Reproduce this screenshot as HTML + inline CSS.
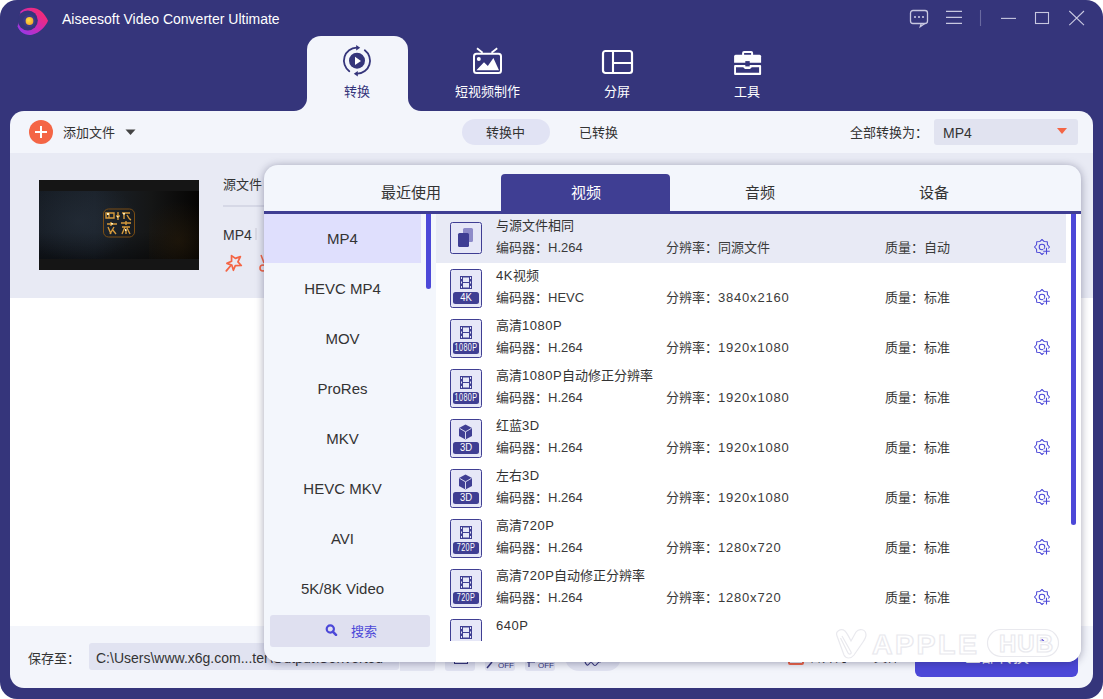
<!DOCTYPE html>
<html lang="zh-CN"><head><meta charset="utf-8">
<style>
*{box-sizing:border-box;margin:0;padding:0}
html,body{width:1103px;height:699px;overflow:hidden;background:#fff}
body{font-family:"Liberation Sans",sans-serif;color:#333;position:relative}
.a{position:absolute}
.win{left:0;top:0;width:1103px;height:699px;background:#35357b;border-radius:17px;overflow:hidden}
.title{left:62px;top:10px;color:#fff;font-size:14px;line-height:18px}
.panel{left:10px;top:111px;width:1083px;height:577px;background:#f3f5fb;border-radius:14px;overflow:hidden}
.navtab{left:307px;top:36px;width:101px;height:80px;background:#f3f5fb;border-radius:14px 14px 0 0}
.navlbl{font-size:13px;line-height:16px;text-align:center;width:120px}
.t13{font-size:13px;line-height:16px;white-space:nowrap}
.dd{left:264px;top:165px;width:817px;height:497px;background:#f3f6fc;border-radius:14px;overflow:hidden;box-shadow:0 1px 9px rgba(30,30,70,.4)}
.fmt{left:0;width:157px;height:50px;text-align:center;font-size:15px;line-height:50px;color:#333}
.row{left:0;width:630px;height:50px}
.ib{left:14px;top:8px;width:32px;height:32px;border:1.5px solid #3f3e93;border-radius:2.5px;background:#e6e7f7}
.gear{left:598px;top:25px}
.tb{top:9px;width:174px;height:38px;line-height:38px;text-align:center;font-size:15px;color:#333}
.badge{left:17px;top:28px;width:26px;height:12px;background:#3f3e93;border-radius:2.5px;color:#fff;font-size:10px;line-height:12px;overflow:hidden;white-space:nowrap}
.badge span{position:absolute;left:50%;top:0;transform:translateX(-50%) scaleX(.95)}
.badge.n span{transform:translateX(-50%) scaleX(.72);letter-spacing:.6px}
.tt{color:#333}
.d{letter-spacing:.8px}
.l{letter-spacing:.5px}
.dt{color:#3a3a3a}
</style></head><body>
<svg width="0" height="0" style="position:absolute">
<defs>
<symbol id="film" viewBox="0 0 13 13"><rect x="0" y="0" width="12" height="13" fill="#3f3e93"/><rect x="3" y="1.5" width="6" height="4.5" fill="#e6e7f7"/><rect x="3" y="7" width="6" height="4.5" fill="#e6e7f7"/><path d="M1.5 1 V3 M1.5 5.5 V7.5 M1.5 10 V12 M10.5 1 V3 M10.5 5.5 V7.5 M10.5 10 V12" stroke="#e6e7f7" stroke-width="1"/></symbol>
<symbol id="cube" viewBox="0 0 15 16"><path d="M7.5 0.5 L14 4 V12 L7.5 15.5 L1 12 V4 Z" fill="#3f3e93"/><path d="M1.5 4.3 L7.5 7.8 L13.5 4.3 M7.5 7.8 V15" stroke="#e6e7f7" stroke-width="0.9" fill="none"/></symbol>
<mask id="gm"><rect width="17" height="17" fill="#fff"/><path d="M12.5 8.5 V15.5 M9 12 H16" stroke="#000" stroke-width="3.5"/></mask>
<symbol id="gear" viewBox="0 0 17 17"><g mask="url(#gm)"><path id="gp" fill="none" stroke="#4c48d8" stroke-width="1.05" stroke-linejoin="round" d="M8.00 0.50 L10.26 2.55 L13.30 2.70 L13.45 5.74 L15.50 8.00 L13.45 10.26 L13.30 13.30 L10.26 13.45 L8.00 15.50 L5.74 13.45 L2.70 13.30 L2.55 10.26 L0.50 8.00 L2.55 5.74 L2.70 2.70 L5.74 2.55 Z"/><circle cx="8" cy="8" r="2.8" fill="none" stroke="#4c48d8" stroke-width="1.05"/></g><path d="M12.5 8.8 V15.5 M9.2 12.3 H15.8" stroke="#4c48d8" stroke-width="1.1"/></symbol>
</defs></svg>
<div class="a win">
  <!-- logo -->
  <svg class="a" style="left:0;top:0" width="60" height="45" viewBox="0 0 60 45">
    <defs><linearGradient id="lg" x1="0" y1="1" x2="1" y2="0"><stop offset="0" stop-color="#8a3cf2"/><stop offset=".45" stop-color="#c92bb8"/><stop offset=".75" stop-color="#ee2a80"/><stop offset="1" stop-color="#f5386a"/></linearGradient>
    <radialGradient id="yg" cx=".4" cy=".4" r=".7"><stop offset="0" stop-color="#ffe040"/><stop offset="1" stop-color="#f0a030"/></radialGradient></defs>
    <path d="M20.5 11.5 C24 8 31 6.5 37 8.8 C42 11 45.5 15.5 48 20.8 C45.5 26.5 40.5 32.5 32 34.8 C25 36 19.5 32 17.6 26.5 Z" fill="url(#lg)"/>
    <circle cx="27.8" cy="20.4" r="10" fill="#35357b"/>
    <circle cx="29.3" cy="21" r="6.2" fill="#3c3a88"/>
    <circle cx="29.5" cy="21" r="3.9" fill="url(#yg)"/>
  </svg>
  <div class="a title">Aiseesoft Video Converter Ultimate</div>
  <!-- window controls -->
  <svg class="a" style="left:905px;top:8px" width="185" height="22" viewBox="0 0 185 22">
    <g fill="none" stroke="#c8c8e0" stroke-width="1.3">
      <rect x="5.5" y="2.5" width="17" height="13" rx="2.5"/>
      <path d="M16.2 15.5 L15.3 18.6 L19.8 15.5"/>
      <path d="M41 3.4 H57 M41 9.4 H57 M41 15.4 H57" stroke-width="1.1"/>
      <path d="M75.5 2 V18" stroke="#6a6aa0" stroke-width="1.1"/>
      <path d="M96 10.4 H111" stroke-width="1.1"/>
      <rect x="130.5" y="4.5" width="13" height="11" stroke-width="1.1"/>
      <path d="M164.3 3 L179 17.2 M179 3 L164.3 17.2" stroke-width="1.1"/>
    </g>
    <g fill="#c8c8e0"><circle cx="10" cy="9" r="1.1"/><circle cx="14" cy="9" r="1.1"/><circle cx="18" cy="9" r="1.1"/></g>
  </svg>
  <!-- nav tab active -->
  <div class="a navtab"></div>
  <svg class="a" style="left:294px;top:98px" width="13" height="13"><path d="M0 13 H13 V0 A13 13 0 0 1 0 13 Z" fill="#f3f5fb"/></svg>
  <svg class="a" style="left:408px;top:98px" width="13" height="13"><path d="M13 13 H0 V0 A13 13 0 0 0 13 13 Z" fill="#f3f5fb"/></svg>
  <!-- nav icons -->
  <svg class="a" style="left:341px;top:45px" width="32" height="32" viewBox="0 0 32 32">
    <g fill="none" stroke="#35357b" stroke-width="1.8" stroke-linecap="round">
      <path d="M8.3 26.2 A13 13 0 0 1 15.6 2.7"/>
      <path d="M23.8 5.3 A13 13 0 0 1 16.4 28.7"/>
    </g>
    <path d="M15.2 0 L19.2 2.8 L15.2 5.6 Z" fill="#35357b"/>
    <path d="M16.8 25.9 L12.8 28.7 L16.8 31.5 Z" fill="#35357b"/>
    <circle cx="16" cy="15.7" r="8" fill="#35357b"/>
    <path d="M14 11.8 L20 15.9 L14 20 Z" fill="#fff"/>
  </svg>
  <div class="a navlbl" style="left:297px;top:84px;color:#35357b">转换</div>

  <svg class="a" style="left:470px;top:46px" width="34" height="30" viewBox="0 0 34 30">
    <path d="M7 2.3 L12.6 6.8 M27.2 2.3 L21.5 6.8" stroke="#fff" stroke-width="1.8" fill="none"/>
    <rect x="4" y="7.7" width="27" height="19.3" rx="2.5" fill="none" stroke="#fff" stroke-width="2"/>
    <circle cx="8.8" cy="12.9" r="2" fill="#fff"/>
    <path d="M6.4 24.2 L14 16.2 L17.8 20 L23.4 12 L29 24.2 Z" fill="#fff"/>
  </svg>
  <div class="a navlbl" style="left:427px;top:84px;color:#fff">短视频制作</div>

  <svg class="a" style="left:600px;top:48px" width="34" height="28" viewBox="0 0 34 28">
    <rect x="3" y="3" width="29" height="22" rx="2.5" fill="none" stroke="#fff" stroke-width="2.2"/>
    <path d="M13 3 V25 M13 15 H32" stroke="#fff" stroke-width="2.1" fill="none"/>
  </svg>
  <div class="a navlbl" style="left:557px;top:84px;color:#fff">分屏</div>

  <svg class="a" style="left:731px;top:49px" width="32" height="28" viewBox="0 0 32 28">
    <rect x="12.1" y="2.9" width="9" height="4.5" rx="1" fill="none" stroke="#fff" stroke-width="2"/>
    <path d="M3.1 13.8 V7.3 Q3.1 5.8 4.6 5.8 H28.6 Q30.1 5.8 30.1 7.3 V13.8 Z" fill="#fff"/>
    <path fill="#fff" fill-rule="evenodd" d="M4.1 16 H29.1 Q30.1 16 30.1 17 V25 Q30.1 26 29.1 26 H4.1 Q3.1 26 3.1 25 V17 Q3.1 16 4.1 16 Z M5 18.2 V23.8 H28.1 V18.2 H20.8 L19 19.9 H14 L12.2 18.2 Z"/>
    <rect x="14.3" y="12.1" width="4.4" height="5.3" fill="#35357b"/>
  </svg>
  <div class="a navlbl" style="left:687px;top:84px;color:#fff">工具</div>

  <!-- main light panel -->
  <div class="a panel">
    <!-- toolbar -->
    <div class="a" style="left:19px;top:9px;width:24px;height:24px;border-radius:50%;background:#f46545"></div>
    <div class="a" style="left:25px;top:20px;width:12px;height:2px;background:#fff"></div>
    <div class="a" style="left:30px;top:15px;width:2px;height:12px;background:#fff"></div>
    <div class="a t13" style="left:53px;top:14px">添加文件</div>
    <svg class="a" style="left:115px;top:18px" width="12" height="7"><path d="M0.5 0.5 H10.5 L5.5 6 Z" fill="#444"/></svg>
    <div class="a" style="left:452px;top:8px;width:88px;height:26px;border-radius:13px;background:#e1e3f4"></div>
    <div class="a t13" style="left:476px;top:14px">转换中</div>
    <div class="a t13" style="left:569px;top:14px">已转换</div>
    <div class="a t13" style="left:840px;top:14px">全部转换为：</div>
    <div class="a" style="left:924px;top:8px;width:144px;height:26px;border-radius:3px;background:#e1e3f0"></div>
    <div class="a t13" style="left:933px;top:14px;font-size:14px">MP4</div>
    <svg class="a" style="left:1047px;top:17px" width="11" height="7"><path d="M0 0 H10 L5 6 Z" fill="#f46545"/></svg>

    <!-- content -->
    <div class="a" style="left:0;top:42px;width:1083px;height:145px;background:#e8eaf4"></div>
    <div class="a" style="left:0;top:187px;width:1083px;height:328px;background:#fff"></div>
    <div class="a" style="left:29px;top:69px;width:160px;height:90px;background:#151515;overflow:hidden">
      <div class="a" style="left:0;top:11px;width:160px;height:68px;background:linear-gradient(90deg,#161c24 0%,#1b222b 35%,#151616 70%,#050403 100%)"></div>
      <div class="a" style="left:0;top:11px;width:160px;height:68px;background:radial-gradient(ellipse 60px 40px at 40px 30px,rgba(40,50,62,.5),rgba(0,0,0,0)),linear-gradient(180deg,rgba(0,0,0,0) 60%,rgba(0,0,0,.45) 100%)"></div>
      <div class="a" style="left:110px;top:11px;width:50px;height:68px;background:radial-gradient(ellipse 40px 40px at 30px 50px,rgba(40,28,10,.6),rgba(0,0,0,0))"></div>
      <svg class="a" style="left:63px;top:27px" width="34" height="32" viewBox="0 0 34 32">
        <rect x="1.5" y="2" width="31" height="28" rx="5" fill="none" stroke="#7a4d14" stroke-width="1"/>
        <g fill="none" stroke="#d69a3c" stroke-width="1.4">
          <path d="M4 6 H12 V11 H4 Z M7 6 V11"/>
          <path d="M16 5 V13 M14 9 H18 M20 6 H28 M22 6 V12 M25 8 Q27 12 29 13"/>
          <path d="M5 17 H15 M9 15 V19 M6 20 L9 27 M12 20 L8 27 M10 22 L14 27"/>
          <path d="M19 16 H29 M24 14 V18 M20 20 H28 M23 20 L20 27 M25 21 L28 27 M24 23 V27"/>
        </g>
        <g fill="#fff1c0"><rect x="5" y="6" width="2" height="2"/><rect x="21" y="6" width="2" height="1.5"/><rect x="9" y="16" width="2" height="1.5"/><rect x="23" y="22" width="1.5" height="2"/><rect x="15" y="9" width="1.5" height="1.5"/></g>
      </svg>
    </div>
    <div class="a t13" style="left:213px;top:66px">源文件</div>
    <div class="a" style="left:213px;top:94px;width:60px;height:2px;background:#d6d8e6"></div>
    <div class="a t13" style="left:213px;top:116px;font-size:14px">MP4</div>
    <div class="a" style="left:245px;top:117px;width:2px;height:12px;background:#d8d9e4"></div>
    <svg class="a" style="left:214px;top:142px" width="20" height="20" viewBox="0 0 20 20">
      <path d="M7.5 2.6 L11.4 5.4 L16.4 3.6 L13.9 8.8 L17.3 12.5 L11.3 12.6 L9.4 17.3 L7.8 12.1 L2.9 10.4 L7.6 8.3 Z" fill="none" stroke="#f46545" stroke-width="1.7" stroke-linejoin="round"/>
      <path d="M6.4 13 L2.3 17.8" stroke="#f46545" stroke-width="1.8" stroke-linecap="round"/>
    </svg>
    <svg class="a" style="left:247px;top:142px" width="10" height="20" viewBox="0 0 10 20">
      <path d="M4 2 L7 10" stroke="#f46545" stroke-width="1.5"/>
      <circle cx="6" cy="15" r="3" fill="none" stroke="#f46545" stroke-width="1.6"/>
    </svg>

    <!-- bottom bar -->
    <div class="a t13" style="left:18px;top:540px">保存至：</div>
    <div class="a" style="left:79px;top:532px;width:310px;height:27px;border-radius:3px;background:#e1e3f1"></div>
    <div class="a t13" style="left:86px;top:539px;font-size:14px">C:\Users\www.x6g.com...ter\Output\Converted</div>
    <div class="a" style="left:390px;top:532px;width:35px;height:28px;border-radius:0 3px 3px 0;background:#e4e6f2"></div>
    <div class="a" style="left:435px;top:532px;width:30px;height:28px;border-radius:3px;background:#e1e3f1"></div>
    <div class="a" style="left:444px;top:545px;width:14px;height:8px;border:1.3px solid #35357b;border-top:none"></div>
    <div class="a" style="left:475px;top:532px;width:30px;height:28px;border-radius:3px;background:#e1e3f1"></div>
    <div class="a" style="left:515px;top:532px;width:30px;height:28px;border-radius:3px;background:#e1e3f1"></div>
    <div class="a" style="left:555px;top:532px;width:56px;height:28px;border-radius:14px;background:#e1e3f1"></div>
    <svg class="a" style="left:476px;top:549px" width="12" height="9"><path d="M1 8 L6 2" stroke="#35357b" stroke-width="1.5"/></svg>
    <div class="a" style="left:488px;top:550px;font-size:8px;line-height:9px;color:#35357b">OFF</div>
    <svg class="a" style="left:516px;top:548px" width="12" height="9"><path d="M3 1 V8 M1 3 H9" stroke="#35357b" stroke-width="1.2"/></svg>
    <div class="a" style="left:528px;top:550px;font-size:8px;line-height:9px;color:#35357b">OFF</div>
    <svg class="a" style="left:574px;top:548px" width="20" height="10"><path d="M1 3 Q3 8 5 5 T9 5 T13 5 T17 3" fill="none" stroke="#35357b" stroke-width="1.2"/></svg>
    <div class="a" style="left:778px;top:539px;width:16px;height:15px;border:2px solid #f46545;border-radius:2px"></div>
    <div class="a t13" style="left:799px;top:538px">合并为一个文件</div>
    <div class="a" style="left:905px;top:525px;width:163px;height:41px;border-radius:6px;background:#4c48d8"></div>
    <div class="a" style="left:905px;top:536px;width:163px;text-align:center;color:#fff;font-size:16px;line-height:20px">全部转换</div>
  </div>

  <!-- dropdown -->
  <div class="a dd">
<div class="a tb" style="left:60px">最近使用</div>
<div class="a" style="left:237px;top:9px;width:169px;height:38px;background:#3f3e93;border-radius:4px 4px 0 0"></div>
<div class="a tb" style="left:235px;color:#fff">视频</div>
<div class="a tb" style="left:409px">音频</div>
<div class="a tb" style="left:583px">设备</div>
<div class="a" style="left:0;top:46px;width:817px;height:3px;background:#3f3e93"></div>
<div class="a" style="left:0;top:49px;width:157px;height:49px;background:#dfdffd"></div>
<div class="a fmt" style="top:49px">MP4</div>
<div class="a fmt" style="top:99px">HEVC MP4</div>
<div class="a fmt" style="top:149px">MOV</div>
<div class="a fmt" style="top:199px">ProRes</div>
<div class="a fmt" style="top:249px">MKV</div>
<div class="a fmt" style="top:299px">HEVC MKV</div>
<div class="a fmt" style="top:349px">AVI</div>
<div class="a fmt" style="top:399px">5K/8K Video</div>
<div class="a" style="left:162px;top:49px;width:5px;height:75px;border-radius:0 0 3px 3px;background:#4c48d8"></div>
<div class="a" style="left:6px;top:450px;width:160px;height:32px;border-radius:3px;background:#dfe0f0"></div>
<svg class="a" style="left:61px;top:459px" width="14" height="12" viewBox="0 0 14 12"><circle cx="5.3" cy="5" r="3.6" fill="none" stroke="#4c48d8" stroke-width="2.2"/><path d="M7.8 7.6 L11 10.8" stroke="#4c48d8" stroke-width="2.6" stroke-linecap="round"/></svg>
<div class="a t13" style="left:87px;top:459px;color:#4c48d8">搜索</div>
<div class="a" style="left:172px;top:49px;width:645px;height:448px;background:#fff"></div>
<div class="a" style="left:172px;top:49px;width:645px;height:427px;overflow:hidden">
<div class="a" style="left:0;top:0;width:630px;height:49px;background:#e8eaf5"></div>
<div class="a row" style="top:0px">
<div class="a ib" style="top:8px;height:32px"></div>
<div class="a" style="left:27px;top:14px;width:10px;height:13.5px;background:#8e8bc9;border-radius:1.5px"></div>
<div class="a" style="left:22px;top:19px;width:10.5px;height:14px;background:#3f3e93;border-radius:1.5px"></div>
<div class="a t13 tt" style="left:60px;top:4px">与源文件相同</div>
<div class="a t13 dt" style="left:60px;top:26px">编码器：H.264</div>
<div class="a t13 dt" style="left:230px;top:26px">分辨率：同源文件</div>
<div class="a t13 dt" style="left:449px;top:26px">质量：自动</div>
<svg class="a" style="left:598px;top:25px" width="17" height="17" viewBox="0 0 17 17"><use href="#gear"/></svg>
</div>
<div class="a row" style="top:50px">
<div class="a ib" style="top:5px;height:39px"></div>
<svg class="a" style="left:24px;top:12px" width="13" height="13" viewBox="0 0 13 13"><use href="#film"/></svg>
<div class="a badge"><span>4K</span></div>
<div class="a t13 tt" style="left:60px;top:4px"><span class="l">4K</span>视频</div>
<div class="a t13 dt" style="left:60px;top:26px">编码器：HEVC</div>
<div class="a t13 dt" style="left:230px;top:26px">分辨率：<span class="d">3840x2160</span></div>
<div class="a t13 dt" style="left:449px;top:26px">质量：标准</div>
<svg class="a" style="left:598px;top:25px" width="17" height="17" viewBox="0 0 17 17"><use href="#gear"/></svg>
</div>
<div class="a row" style="top:100px">
<div class="a ib" style="top:5px;height:39px"></div>
<svg class="a" style="left:24px;top:12px" width="13" height="13" viewBox="0 0 13 13"><use href="#film"/></svg>
<div class="a badge n"><span>1080P</span></div>
<div class="a t13 tt" style="left:60px;top:4px">高清<span class="l">1080P</span></div>
<div class="a t13 dt" style="left:60px;top:26px">编码器：H.264</div>
<div class="a t13 dt" style="left:230px;top:26px">分辨率：<span class="d">1920x1080</span></div>
<div class="a t13 dt" style="left:449px;top:26px">质量：标准</div>
<svg class="a" style="left:598px;top:25px" width="17" height="17" viewBox="0 0 17 17"><use href="#gear"/></svg>
</div>
<div class="a row" style="top:150px">
<div class="a ib" style="top:5px;height:39px"></div>
<svg class="a" style="left:24px;top:12px" width="13" height="13" viewBox="0 0 13 13"><use href="#film"/></svg>
<div class="a badge n"><span>1080P</span></div>
<div class="a t13 tt" style="left:60px;top:4px">高清<span class="l">1080P</span>自动修正分辨率</div>
<div class="a t13 dt" style="left:60px;top:26px">编码器：H.264</div>
<div class="a t13 dt" style="left:230px;top:26px">分辨率：<span class="d">1920x1080</span></div>
<div class="a t13 dt" style="left:449px;top:26px">质量：标准</div>
<svg class="a" style="left:598px;top:25px" width="17" height="17" viewBox="0 0 17 17"><use href="#gear"/></svg>
</div>
<div class="a row" style="top:200px">
<div class="a ib" style="top:5px;height:39px"></div>
<svg class="a" style="left:22px;top:10px" width="15" height="16" viewBox="0 0 15 16"><use href="#cube"/></svg>
<div class="a badge"><span>3D</span></div>
<div class="a t13 tt" style="left:60px;top:4px">红蓝<span class="l">3D</span></div>
<div class="a t13 dt" style="left:60px;top:26px">编码器：H.264</div>
<div class="a t13 dt" style="left:230px;top:26px">分辨率：<span class="d">1920x1080</span></div>
<div class="a t13 dt" style="left:449px;top:26px">质量：标准</div>
<svg class="a" style="left:598px;top:25px" width="17" height="17" viewBox="0 0 17 17"><use href="#gear"/></svg>
</div>
<div class="a row" style="top:250px">
<div class="a ib" style="top:5px;height:39px"></div>
<svg class="a" style="left:22px;top:10px" width="15" height="16" viewBox="0 0 15 16"><use href="#cube"/></svg>
<div class="a badge"><span>3D</span></div>
<div class="a t13 tt" style="left:60px;top:4px">左右<span class="l">3D</span></div>
<div class="a t13 dt" style="left:60px;top:26px">编码器：H.264</div>
<div class="a t13 dt" style="left:230px;top:26px">分辨率：<span class="d">1920x1080</span></div>
<div class="a t13 dt" style="left:449px;top:26px">质量：标准</div>
<svg class="a" style="left:598px;top:25px" width="17" height="17" viewBox="0 0 17 17"><use href="#gear"/></svg>
</div>
<div class="a row" style="top:300px">
<div class="a ib" style="top:5px;height:39px"></div>
<svg class="a" style="left:24px;top:12px" width="13" height="13" viewBox="0 0 13 13"><use href="#film"/></svg>
<div class="a badge n"><span>720P</span></div>
<div class="a t13 tt" style="left:60px;top:4px">高清<span class="l">720P</span></div>
<div class="a t13 dt" style="left:60px;top:26px">编码器：H.264</div>
<div class="a t13 dt" style="left:230px;top:26px">分辨率：<span class="d">1280x720</span></div>
<div class="a t13 dt" style="left:449px;top:26px">质量：标准</div>
<svg class="a" style="left:598px;top:25px" width="17" height="17" viewBox="0 0 17 17"><use href="#gear"/></svg>
</div>
<div class="a row" style="top:350px">
<div class="a ib" style="top:5px;height:39px"></div>
<svg class="a" style="left:24px;top:12px" width="13" height="13" viewBox="0 0 13 13"><use href="#film"/></svg>
<div class="a badge n"><span>720P</span></div>
<div class="a t13 tt" style="left:60px;top:4px">高清<span class="l">720P</span>自动修正分辨率</div>
<div class="a t13 dt" style="left:60px;top:26px">编码器：H.264</div>
<div class="a t13 dt" style="left:230px;top:26px">分辨率：<span class="d">1280x720</span></div>
<div class="a t13 dt" style="left:449px;top:26px">质量：标准</div>
<svg class="a" style="left:598px;top:25px" width="17" height="17" viewBox="0 0 17 17"><use href="#gear"/></svg>
</div>
<div class="a row" style="top:400px">
<div class="a ib" style="top:5px;height:39px"></div>
<svg class="a" style="left:24px;top:12px" width="13" height="13" viewBox="0 0 13 13"><use href="#film"/></svg>
<div class="a badge n"><span>640P</span></div>
<div class="a t13 tt" style="left:60px;top:4px"><span class="l">640P</span></div>
<div class="a t13 dt" style="left:60px;top:26px">编码器：H.264</div>
<div class="a t13 dt" style="left:230px;top:26px">分辨率：<span class="d">640x480</span></div>
<div class="a t13 dt" style="left:449px;top:26px">质量：标准</div>
<svg class="a" style="left:598px;top:25px" width="17" height="17" viewBox="0 0 17 17"><use href="#gear"/></svg>
</div>
</div>
<div class="a" style="left:807px;top:49px;width:5px;height:311px;border-radius:0 0 3px 3px;background:#4c48d8"></div>
  </div>
</div>
<svg class="a" style="left:834px;top:627px" width="228" height="33" viewBox="0 0 228 33">
  <g fill="none" stroke="#e9e9ee" stroke-width="1.2">
    <path d="M3 9 C1 4 7 1 11 4 C13 6 15 10 17 14 L22 5 C25 1 32 2 32 8 C32 10 31 12 29 15 L20 28 C17 32 12 32 10 28 Z"/>
    <path d="M8 9 L17 25 C18 27 15 28 14 26 L6.5 11"/>
    <text x="38" y="26.5" font-family="Liberation Sans" font-weight="bold" font-size="28.5" letter-spacing="2.5">APPLE</text>
    <rect x="153.5" y="2.5" width="71" height="27" rx="13.5"/>
    <text x="165" y="25" font-family="Liberation Sans" font-weight="bold" font-size="24" letter-spacing="1">HUB</text>
  </g>
</svg>
</body></html>
